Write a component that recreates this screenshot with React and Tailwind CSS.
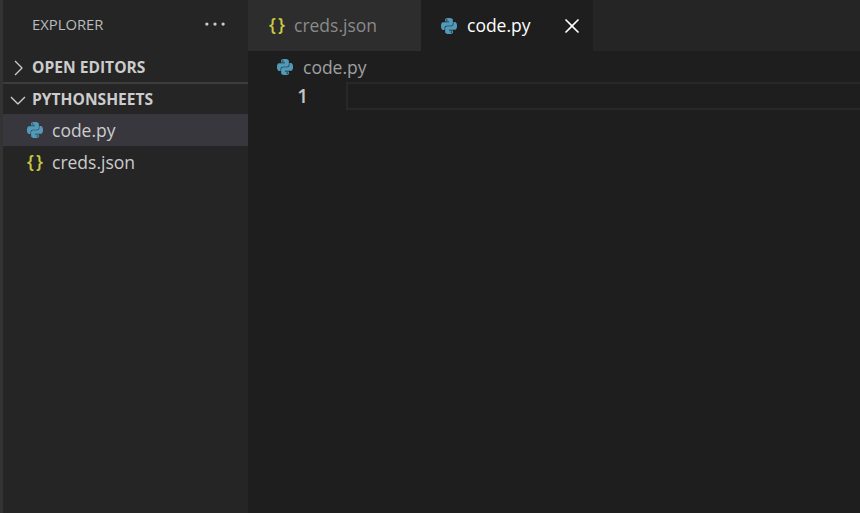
import React from 'react';
import { SiPython } from 'react-icons/si';
import { VscChevronRight, VscChevronDown, VscEllipsis, VscClose } from 'react-icons/vsc';

const PyIcon = ({ className = '' }) => (
  <SiPython className={`w-4 h-4 text-[#519aba] shrink-0 ${className}`} />
);

const JsonIcon = ({ className = '' }) => (
  <span className={`w-4 shrink-0 flex justify-between text-[18px] leading-none text-[#cbcb41] font-semibold -mt-[3px] ${className}`}>
    <span>{'{'}</span>
    <span>{'}'}</span>
  </span>
);

const SectionHeader = ({ open, label, className = '' }) => (
  <div className={`flex items-center ${className}`}>
    <div className="w-[29px] flex justify-start pl-[3px]">
      {open
        ? <VscChevronDown className="w-[24px] h-[24px] text-[#cccccc]" />
        : <VscChevronRight className="w-[24px] h-[24px] text-[#cccccc]" />}
    </div>
    <span className="text-[15.6px] font-bold text-[#cccccc]">{label}</span>
  </div>
);

const FileRow = ({ icon, name, selected }) => (
  <div className={`flex items-center h-[32px] pl-[24px] gap-[9px] text-[17.5px] text-[#cccccc] ${selected ? 'bg-[#37373d]' : ''}`}>
    {icon}
    <span>{name}</span>
  </div>
);

export default function App() {
  return (
    <div className="flex w-[860px] h-[513px] overflow-hidden bg-[#1e1e1e] font-['Open_Sans',sans-serif]">
      <div className="w-[3px] bg-[#333333]" />

      {/* Sidebar */}
      <div className="w-[245px] bg-[#252526] flex flex-col">
        <div className="flex items-center justify-between h-[51px] pl-[29px] pr-[20px] pb-[3px]">
          <span className="text-[14.8px] text-[#bbbbbb]">EXPLORER</span>
          <VscEllipsis className="w-[26px] h-[26px] text-[#cccccc]" />
        </div>
        <SectionHeader label="OPEN EDITORS" className="h-[31px] pt-[2px]" />
        <div className="h-[2px] bg-[#3c3c3c]" />
        <SectionHeader open label="PYTHONSHEETS" className="h-[30px] pt-[1px]" />
        <FileRow selected icon={<PyIcon />} name="code.py" />
        <FileRow icon={<JsonIcon />} name="creds.json" />
      </div>

      {/* Editor */}
      <div className="flex-1 flex flex-col min-w-0">
        <div className="flex h-[51px] bg-[#252526]">
          <div className="w-[173px] bg-[#2d2d2d] flex items-center pl-[21px] gap-[9px] text-[17.5px] text-[#8a8a8a]">
            <JsonIcon />
            <span>creds.json</span>
          </div>
          <div className="w-[172px] bg-[#1e1e1e] flex items-center pl-[20px] text-[17.5px] text-white">
            <PyIcon />
            <span className="ml-[10px]">code.py</span>
            <VscClose className="w-[26px] h-[26px] ml-[28px]" />
          </div>
        </div>

        <div className="flex items-center h-[32px] pl-[29px] gap-[10px] text-[17.5px] text-[#a0a0a0]">
          <PyIcon />
          <span>code.py</span>
        </div>

        <div className="flex h-[28px] -mt-[1px]">
          <div className="w-[60px] text-right text-[19px] leading-[29px] font-semibold text-[#c6c6c6]">1</div>
          <div className="flex-1 ml-[38px] border-2 border-r-0 border-[#282828]" />
        </div>
      </div>
    </div>
  );
}
